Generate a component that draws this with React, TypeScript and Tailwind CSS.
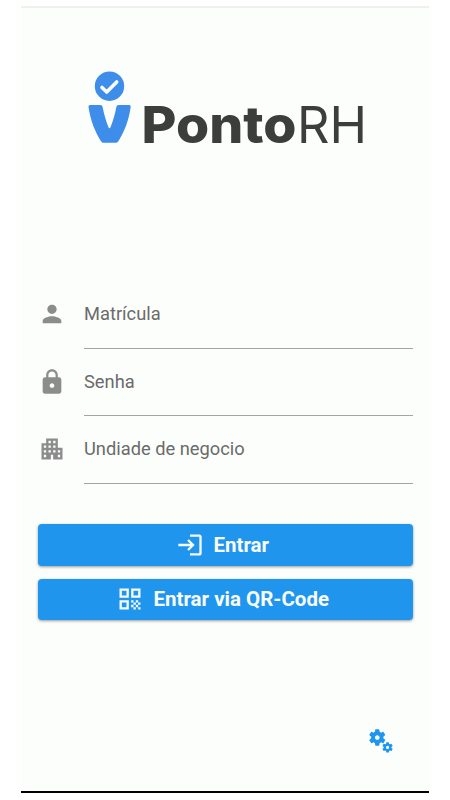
import type { ReactNode } from "react";
import {
  MdApartment,
  MdLock,
  MdLogin,
  MdMiscellaneousServices,
  MdPerson,
  MdQrCode,
} from "react-icons/md";

function Logo() {
  return (
    <svg
      className="mt-[42px] ml-[55px] block overflow-visible"
      width="300"
      height="120"
      viewBox="76 50 300 120"
      role="img"
      aria-label="PontoRH"
    >
      <circle cx="109.5" cy="86.2" r="14.7" fill="#3f8deb" />
      <path
        d="M102 87.500l4.700 4.500 10-10"
        fill="none"
        stroke="#fcfefc"
        strokeWidth="3.6"
        strokeLinecap="round"
        strokeLinejoin="round"
      />
      <path
        d="M90 105H100.500Q102.100 105 102.600 106.800C104 114.500 105.900 120.500 108.400 127Q109.500 129.500 110.600 127C113.100 120.500 115 114.500 116.400 106.800Q116.900 105 118.500 105H129.200Q131 105 130.700 107C128.700 121 124.200 132 118.300 141.200Q117.300 142.700 115.700 142.700H103.500Q101.800 142.700 101 141.200C95.300 132 90.500 121 88.500 107Q88.200 105 90 105Z"
        fill="#3f8deb"
      />
      <text
        x="141.500"
        y="142.500"
        textLength="155"
        lengthAdjust="spacingAndGlyphs"
        className="font-['Inter'] text-[50.500px] font-extrabold"
        fill="#3c3e3c"
      >
        Ponto
      </text>
      <text
        x="297"
        y="142.500"
        textLength="70"
        lengthAdjust="spacingAndGlyphs"
        className="font-['Inter'] text-[50.500px] font-normal"
        fill="#3c3e3c"
      >
        RH
      </text>
    </svg>
  );
}

function Field({ icon, label }: { icon: ReactNode; label: string }) {
  return (
    <label className="flex h-[67.5px] items-start">
      <span className="flex h-7 w-[46px] shrink-0 text-[#8b8c8b]">{icon}</span>
      <span className="flex h-[48.500px] flex-1 items-start border-b-[1.5px] border-[#a4a5a4] text-[18.300px] leading-7 text-[#6a6b6a]">
        {label}
      </span>
    </label>
  );
}

function ActionButton({ icon, label }: { icon: ReactNode; label: string }) {
  return (
    <button className="flex h-[41.500px] w-full items-center justify-center gap-[9px] rounded-[4px] bg-[#2095ee] pr-[5px] text-[20.500px] font-bold text-[#f8fcff] shadow-[0_1px_3px_rgba(0,0,0,0.4)]">
      {icon}
      <span className="pt-px">{label}</span>
    </button>
  );
}

export default function App() {
  return (
    <div className="h-[800px] w-[450px] bg-white pt-1.5 pl-[21px] font-['Roboto',sans-serif]">
      <main className="flex h-[787px] w-[408px] flex-col border-t-2 border-b-2 border-t-[#efefee] border-b-black bg-[#fcfefc]">
        <Logo />
        <form className="mt-[130px] pr-[16.500px] pl-[17px]">
          <Field icon={<MdPerson size={28} />} label="Matrícula" />
          <Field icon={<MdLock size={28} />} label="Senha" />
          <Field icon={<MdApartment size={28} />} label="Undiade de negocio" />
        </form>
        <div className="mt-[21.500px] flex flex-col gap-[13px] pr-[16.500px] pl-[17px]">
          <ActionButton icon={<MdLogin size={28} />} label="Entrar" />
          <ActionButton icon={<MdQrCode size={28} />} label="Entrar via QR-Code" />
        </div>
        <button className="mt-auto mr-[34.500px] mb-[36px] self-end text-[#2095ee]" aria-label="Configurações">
          <MdMiscellaneousServices size={28} />
        </button>
      </main>
    </div>
  );
}
